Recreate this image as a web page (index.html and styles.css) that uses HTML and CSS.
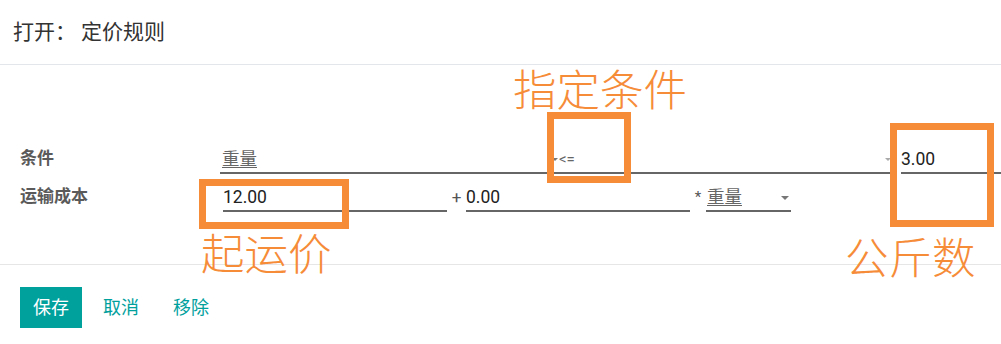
FILE: index.html
```html
<!DOCTYPE html>
<html lang="zh">
<head>
<meta charset="utf-8">
<title>定价规则</title>
<link rel="stylesheet" href="styles.css">
</head>
<body>
<div class="dialog">
  <header class="dlg-header">
    <h4 class="dlg-title"><span class="dlg-open">打开：</span>定价规则</h4>
  </header>
  <section class="dlg-body">
    <div class="form-grid">
      <div class="label">条件</div>
      <div class="cond-row">
        <div class="field select var-select"><span class="sel-text">重量</span><span class="caret"></span></div>
        <div class="field select op-select"><span class="op-text">&lt;=</span><span class="caret small"></span></div>
        <div class="field value-input">3.00</div>
      </div>
      <div class="label">运输成本</div>
      <div class="cost-row">
        <div class="field num-input base">12.00</div>
        <span class="sep">+</span>
        <div class="field num-input">0.00</div>
        <span class="sep star">*</span>
        <div class="field select factor"><span class="sel-text">重量</span><span class="caret"></span></div>
      </div>
    </div>
  </section>
  <footer class="dlg-footer">
    <button class="btn btn-primary">保存</button>
    <button class="btn btn-link">取消</button>
    <button class="btn btn-link">移除</button>
  </footer>
</div>

<div class="note-box box-op"></div>
<div class="note-box box-base"></div>
<div class="note-box box-kg"></div>
<div class="note note-op">指定条件</div>
<div class="note note-base">起运价</div>
<div class="note note-kg">公斤数</div>
</body>
</html>
```

FILE: styles.css
```css
* { box-sizing: border-box; }

html, body {
  margin: 0;
  padding: 0;
  background: #fff;
}

body {
  position: relative;
  width: 1001px;
  height: 344px;
  overflow: hidden;
  font-family: Roboto, "Noto Sans CJK SC", sans-serif;
  color: #222;
}

.dlg-header {
  height: 65px;
  border-bottom: 1px solid #e3e7ec;
  padding-left: 13px;
  display: flex;
  align-items: center;
}

.dlg-title {
  margin: 0;
  font-weight: 400;
  font-size: 21px;
  line-height: 24px;
  color: #333;
  padding-bottom: 1px;
}

.dlg-open {
  margin-right: 5px;
}

.dlg-body {
  padding: 83px 0 52px;
  border-bottom: 1px solid #e6e6e6;
}

.form-grid {
  display: grid;
  grid-template-columns: 220px 1fr;
  row-gap: 12px;
  align-items: start;
}

.label {
  padding-left: 20px;
  font-weight: 700;
  font-size: 17px;
  line-height: 20px;
  color: #5a5a5a;
}

.field {
  height: 26px;
  border-bottom: 2px solid #666;
  font-size: 17.5px;
  line-height: 20px;
  padding-top: 1px;
}

.cond-row {
  display: flex;
  align-items: flex-start;
}

.select {
  display: flex;
  align-items: flex-start;
  justify-content: space-between;
  color: #666;
}

.sel-text {
  text-decoration: underline;
  text-decoration-thickness: 1px;
  text-underline-offset: 2px;
  padding-left: 2px;
}

.caret {
  display: inline-block;
  width: 0;
  height: 0;
  border-left: 4px solid transparent;
  border-right: 4px solid transparent;
  border-top: 4px solid #777;
  margin-top: 9px;
}

.caret.small {
  border-left-width: 3px;
  border-right-width: 3px;
  border-top: 3px solid #aaa;
  margin-right: 6px;
}

.var-select {
  width: 338px;
}

.var-select .caret {
  border-left-width: 3px;
  border-right-width: 3px;
  border-top-width: 3px;
  margin-top: 9px;
}

.op-select {
  width: 339px;
}

.op-text {
  font-size: 15px;
  color: #666;
  line-height: 20px;
  padding-left: 1px;
}

.value-input {
  width: 100px;
  margin-left: 4px;
  color: #222;
}

.cost-row {
  display: flex;
  align-items: flex-start;
  padding-left: 3px;
}

.num-input {
  width: 224px;
  color: #222;
}

.sep {
  font-size: 17px;
  line-height: 20px;
  color: #555;
  text-align: center;
  width: 19px;
  padding-top: 1px;
}

.sep.star {
  width: 16px;
  font-size: 15px;
}

.factor {
  width: 85px;
  padding-right: 2px;
}

.factor .sel-text {
  padding-left: 1px;
}

.dlg-footer {
  padding: 22px 20px 0;
  display: flex;
  gap: 8px;
}

.btn {
  height: 41px;
  padding: 0 13px;
  border: none;
  border-radius: 0;
  font-family: Roboto, "Noto Sans CJK SC", sans-serif;
  font-size: 18px;
  line-height: 41px;
  cursor: pointer;
  background: none;
}

.btn-primary {
  background: #00a09d;
  color: #fff;
}

.btn-link {
  color: #00a09d;
}

/* annotations laid over the screenshot */
.note-box {
  position: absolute;
  border: 7px solid #f68b38;
}

.box-op { left: 547px; top: 112px; width: 84px; height: 71px; }
.box-base { left: 199px; top: 179px; width: 150px; height: 50px; }
.box-kg { left: 890px; top: 123px; width: 104px; height: 104px; }

.note {
  position: absolute;
  color: #f68b38;
  font-family: "Noto Sans CJK SC", sans-serif;
  font-weight: 300;
  font-size: 43.5px;
  line-height: 44px;
  white-space: nowrap;
}

.note-op { left: 513px; top: 66px; }
.note-base { left: 201px; top: 230px; }
.note-kg { left: 845px; top: 234px; }
```
